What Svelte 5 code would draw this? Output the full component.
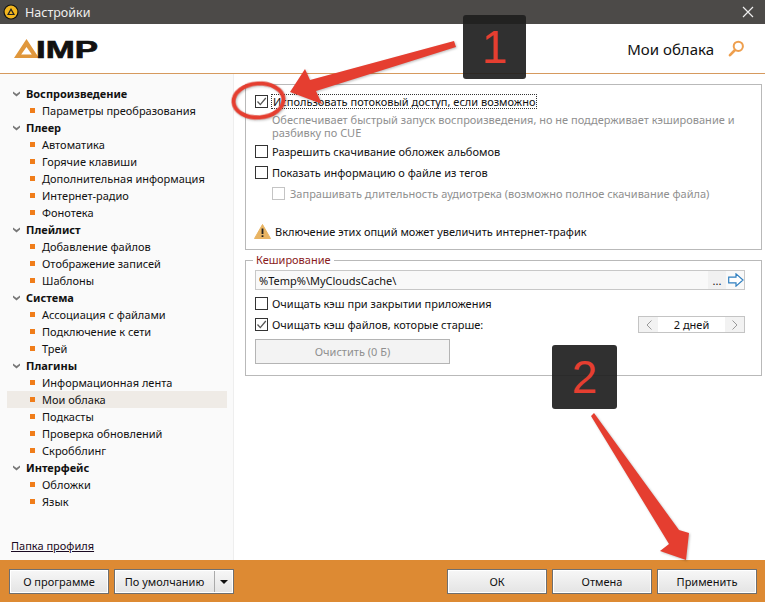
<script>
  const tree = [
    { title: 'Воспроизведение', items: ['Параметры преобразования'] },
    { title: 'Плеер', items: ['Автоматика', 'Горячие клавиши', 'Дополнительная информация', 'Интернет-радио', 'Фонотека'] },
    { title: 'Плейлист', items: ['Добавление файлов', 'Отображение записей', 'Шаблоны'] },
    { title: 'Система', items: ['Ассоциация с файлами', 'Подключение к сети', 'Трей'] },
    { title: 'Плагины', items: ['Информационная лента', 'Мои облака', 'Подкасты', 'Проверка обновлений', 'Скробблинг'] },
    { title: 'Интерфейс', items: ['Обложки', 'Язык'] }
  ];
  const selected = 'Мои облака';
</script>

{#snippet tick()}
  <svg class="tick" width="11" height="11" viewBox="0 0 11 11"><path d="M1.5 5.5 4.3 8.6 9.8 2" fill="none" stroke="#555" stroke-width="1.3" /></svg>
{/snippet}

<div class="window">
  <div class="titlebar">
    <svg width="16" height="16" viewBox="0 0 16 16">
      <circle cx="8" cy="8" r="7.5" fill="#111" />
      <circle cx="8" cy="8" r="6.4" fill="#f2b61f" />
      <path d="M8 4 12 11H4Z M8 6.6 6.1 9.9H9.9Z" fill="#222" fill-rule="evenodd" />
    </svg>
    <span class="title">Настройки</span>
    <svg class="close" width="12" height="12" viewBox="0 0 12 12"><path d="M1 1 11 11M11 1 1 11" stroke="#eee" stroke-width="1.2" /></svg>
  </div>

  <div class="header">
    <svg class="logo" width="86" height="22" viewBox="0 0 86 22">
      <path d="M12.5 1 25 20H0Z M12.5 9 7.2 16.6H17.8Z" fill="#e0973c" fill-rule="evenodd" />
      <text x="22" y="19.5" textLength="62" lengthAdjust="spacingAndGlyphs" class="logo-text">IMP</text>
    </svg>
    <span class="page-name">Мои облака</span>
    <svg width="17" height="17" viewBox="0 0 17 17"><circle cx="10.3" cy="6.3" r="4.6" fill="none" stroke="#ee9f4e" stroke-width="2" /><path d="M7 10 2 15.2" stroke="#ee9f4e" stroke-width="2.6" stroke-linecap="round" /></svg>
  </div>

  <div class="main">
    <aside class="sidebar">
      <div class="tree">
        {#each tree as group}
          <div class="row head">
            <svg width="7" height="6" viewBox="0 0 7 6"><path d="M0 .5 3.5 3 7 .5V2.6L3.5 5.5 0 2.6Z" fill="#777" /></svg>
            <span>{group.title}</span>
          </div>
          {#each group.items as item}
            <div class="row leaf" class:active={item === selected}>
              <i></i><span>{item}</span>
            </div>
          {/each}
        {/each}
      </div>
      <span class="profile">Папка профиля</span>
    </aside>

    <section class="content">
      <div class="box first">
        <label class="check">
          <span class="cb">{@render tick()}</span>
          <span class="focus">Использовать потоковый доступ, если возможно</span>
        </label>
        <p class="hint">Обеспечивает быстрый запуск воспроизведения, но не поддерживает кэширование и разбивку по CUE</p>
        <label class="check second"><span class="cb"></span><span>Разрешить скачивание обложек альбомов</span></label>
        <label class="check third"><span class="cb"></span><span>Показать информацию о файле из тегов</span></label>
        <label class="check sub"><span class="cb off"></span><span>Запрашивать длительность аудиотрека (возможно полное скачивание файла)</span></label>
        <div class="warning">
          <svg width="17" height="15" viewBox="0 0 17 15"><path d="M8.5 .5 16.5 14.5H.5Z" fill="#e9b463" stroke="#e9b463" stroke-linejoin="round" /><path d="M8.5 4.5V10M8.5 11.2V13" stroke="#222" stroke-width="1.8" /></svg>
          <span>Включение этих опций может увеличить интернет-трафик</span>
        </div>
      </div>

      <div class="box cache">
        <span class="legend">Кеширование</span>
        <div class="path">
          <span class="path-text">%Temp%\MyCloudsCache\</span>
          <span class="dots">...</span>
          <svg width="16" height="14" viewBox="0 0 16 14"><path d="M.7 4.2H8V.9L15 7 8 13.1V9.8H.7Z" fill="#fff" stroke="#2f7fc0" stroke-width="1.2" /></svg>
        </div>
        <label class="check c1"><span class="cb"></span><span>Очищать кэш при закрытии приложения</span></label>
        <div class="line">
          <label class="check"><span class="cb">{@render tick()}</span><span>Очищать кэш файлов, которые старше:</span></label>
          <div class="spin">
            <span class="arrow"><svg width="6" height="10" viewBox="0 0 6 10"><path d="M5.5 .5 1 5 5.5 9.5" fill="none" stroke="#999" /></svg></span>
            <span class="value">2 дней</span>
            <span class="arrow"><svg width="6" height="10" viewBox="0 0 6 10"><path d="M.5 .5 5 5 .5 9.5" fill="none" stroke="#999" /></svg></span>
          </div>
        </div>
        <div class="clear">Очистить (0 Б)</div>
      </div>
    </section>
  </div>

  <div class="footer">
    <button class="btn">О программе</button>
    <div class="btn split"><span class="split-text">По умолчанию</span><span class="split-arrow"></span></div>
    <div class="spacer"></div>
    <button class="btn">ОК</button>
    <button class="btn">Отмена</button>
    <button class="btn">Применить</button>
  </div>

  <div class="badge one">1</div>
  <div class="badge two">2</div>
  <svg class="overlay" width="765" height="602" viewBox="0 0 765 602">
    <g class="marks">
      <ellipse cx="258.5" cy="100.5" rx="25" ry="17" transform="rotate(-4 258.5 100.5)" fill="none" stroke="#e53e30" stroke-width="4" />
      <path d="M290 92 305 69 310 80 454 41 456 47 316 91 322 104Z" fill="#e53e30" />
      <path d="M591 416 594 413 679 530 689 533 686 560 660 551 669 544Z" fill="#e53e30" />
    </g>
  </svg>
</div>

<style>
  :global(body) {
    margin: 0;
  }

  .window {
    position: relative;
    width: 765px;
    height: 602px;
    display: flex;
    flex-direction: column;
    overflow: hidden;
    background: #fff;
    color: #111;
    font-family: "Noto Sans", sans-serif;
    font-size: 11px;
  }

  .titlebar {
    height: 24px;
    display: flex;
    align-items: center;
    gap: 6px;
    padding: 0 11px 0 3px;
    background: #4c4a48;
    flex-shrink: 0;
  }

  .title {
    color: #eee;
    font-size: 12.5px;
  }

  .close {
    margin-left: auto;
  }

  .header {
    height: 49px;
    display: flex;
    align-items: center;
    padding: 0 20px 0 14px;
    border-bottom: 1px solid #d69a5e;
    flex-shrink: 0;
  }

  .logo {
    margin-top: 0;
  }

  .logo-text {
    font-family: "Liberation Sans", sans-serif;
    font-weight: 700;
    font-size: 24px;
    fill: #111;
    stroke: #111;
    stroke-width: 0.7px;
  }

  .page-name {
    margin-left: auto;
    margin-right: 14px;
    font-size: 15px;
  }

  .main {
    flex: 1;
    display: flex;
    min-height: 0;
  }

  .sidebar {
    width: 234px;
    box-sizing: border-box;
    background: #fafafa;
    border-right: 1px solid #eee;
    padding: 11px 6px 7px 7px;
    display: flex;
    flex-direction: column;
    flex-shrink: 0;
  }

  .row {
    height: 17px;
    display: flex;
    align-items: center;
    width: 220px;
  }

  .head {
    font-weight: 700;
    padding-left: 6px;
    gap: 6px;
    box-sizing: border-box;
  }

  .leaf {
    padding-left: 23px;
    gap: 7px;
    box-sizing: border-box;
  }

  .leaf i {
    width: 5px;
    height: 5px;
    background: #f07d1a;
  }

  .leaf.active {
    background: #efebe6;
  }

  .profile {
    margin-top: auto;
    margin-left: 4px;
    text-decoration: underline;
    color: #1a0a22;
    line-height: 15px;
  }

  .content {
    flex: 1;
    padding: 10px 9px 0 11px;
    display: flex;
    flex-direction: column;
    gap: 10px;
  }

  .box {
    position: relative;
    box-sizing: border-box;
    border: 1px solid #b9b9b9;
    padding: 0 9px;
  }

  .box.first {
    height: 166px;
    padding-top: 10px;
  }

  .box.cache {
    height: 116px;
    padding-top: 9px;
  }

  .check {
    display: flex;
    align-items: center;
    gap: 4px;
    height: 13px;
    line-height: 13px;
  }

  .cb {
    width: 11px;
    height: 11px;
    border: 1px solid #333;
    display: flex;
    flex-shrink: 0;
    background: #fff;
  }

  .cb.off {
    border-color: #c4c4c4;
  }

  .tick {
    display: block;
  }

  .focus {
    outline: 1px dotted #333;
    padding: 0 1px;
  }

  .hint {
    margin: 5px 0 0 17px;
    color: #8f8f8f;
    line-height: 13px;
    width: 480px;
  }

  .second {
    margin-top: 6px;
  }

  .third {
    margin-top: 8px;
  }

  .sub {
    margin-top: 8px;
    margin-left: 17px;
    gap: 5px;
    color: #8f8f8f;
  }

  .warning {
    display: flex;
    align-items: center;
    gap: 4px;
    margin-top: 24px;
    margin-left: -1px;
    height: 15px;
  }

  .legend {
    position: absolute;
    top: -8px;
    left: 7px;
    padding: 0 3px;
    background: #fff;
    color: #8a1c1c;
    line-height: 14px;
  }

  .path {
    height: 20px;
    box-sizing: border-box;
    border: 1px solid #c8c8c8;
    background: #f9f9f9;
    display: flex;
    align-items: center;
    padding-left: 3px;
    width: 490px;
  }

  .path-text {
    flex: 1;
  }

  .dots {
    width: 18px;
    height: 18px;
    line-height: 20px;
    text-align: center;
    background: #f1f1f1;
    margin-right: 2px;
  }

  .c1 {
    margin-top: 7px;
  }

  .line {
    display: flex;
    align-items: center;
    justify-content: space-between;
    width: 490px;
    margin-top: 6px;
    height: 17px;
  }

  .spin {
    width: 107px;
    height: 17px;
    box-sizing: border-box;
    border: 1px solid #c4c4c4;
    background: #fff;
    display: flex;
    align-items: center;
  }

  .arrow {
    width: 19px;
    height: 15px;
    background: #f2f2f2;
    display: flex;
    align-items: center;
    justify-content: center;
  }

  .value {
    flex: 1;
    text-align: center;
  }

  .clear {
    width: 195px;
    height: 25px;
    margin-top: 6px;
    box-sizing: border-box;
    border: 1px solid #b4b4b4;
    background: #f3f3f3;
    color: #8f8f8f;
    display: flex;
    align-items: center;
    justify-content: center;
  }

  .footer {
    height: 42px;
    background: #dd8a33;
    display: flex;
    align-items: center;
    gap: 5px;
    padding: 0 8px 0 9px;
    flex-shrink: 0;
    box-sizing: border-box;
  }

  .spacer {
    flex: 1;
  }

  .btn {
    width: 100px;
    height: 25px;
    padding: 0;
    box-sizing: border-box;
    border: 1px solid #6f6f6f;
    box-shadow: inset 0 0 0 1px #fff;
    background: linear-gradient(#f7f7f7, #e4e4e4);
    font: inherit;
    color: #111;
    display: flex;
    align-items: center;
    justify-content: center;
  }

  .split {
    width: 120px;
  }

  .split-text {
    flex: 1;
    text-align: center;
    line-height: 21px;
  }

  .split-arrow {
    width: 18px;
    height: 21px;
    border-left: 1px solid #aaa;
    position: relative;
  }

  .split-arrow::after {
    content: "";
    position: absolute;
    left: 5px;
    top: 9px;
    border: 4px solid transparent;
    border-top: 4px solid #111;
    border-bottom: 0;
  }

  .badge {
    position: absolute;
    background: rgba(30, 30, 30, 0.92);
    border-radius: 3px;
    color: #e53e30;
    font-family: "Liberation Sans", sans-serif;
    font-size: 46px;
    display: flex;
    align-items: center;
    justify-content: center;
  }

  .badge.one {
    left: 463px;
    top: 15px;
    width: 63px;
    height: 64px;
  }

  .badge.two {
    left: 552px;
    top: 345px;
    width: 65px;
    height: 64px;
  }

  .overlay {
    position: absolute;
    left: 0;
    top: 0;
    pointer-events: none;
  }

  .marks {
    filter: drop-shadow(1px 1px 1px rgba(0, 0, 0, 0.25));
  }
</style>
